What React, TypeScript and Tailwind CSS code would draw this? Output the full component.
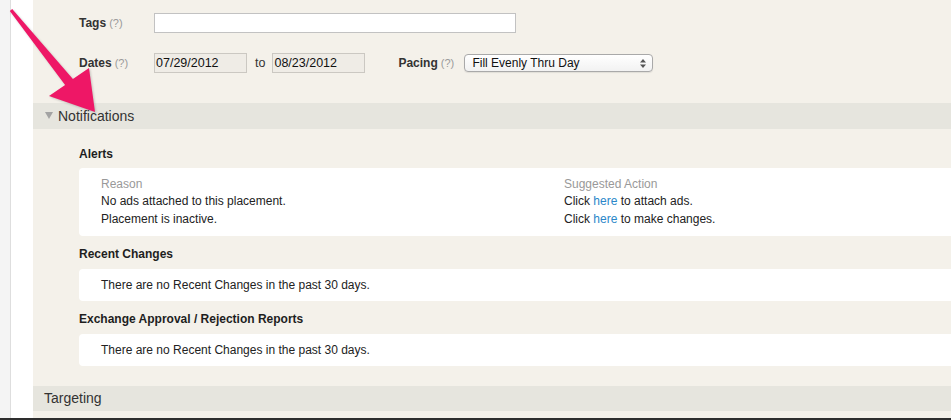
import React from 'react';

function Help() {
  return <span className="ml-[3px] text-[11px] font-normal text-[#9a9a9a]">(?)</span>;
}

function SectionBar({ title, open }: { title: string; open?: boolean }) {
  return (
    <div className="flex h-[26px] items-center bg-[#e6e5de] pl-[11px] text-[14px] text-[#333]">
      {open && (
        <svg width="8" height="7" viewBox="0 0 8 7" className="mr-[5px] ml-[1px] mt-[-2px]">
          <path d="M0 0 L8 0 L4 7 Z" fill="#a3a3a3" />
        </svg>
      )}
      <span>{title}</span>
    </div>
  );
}

function SubLabel({ children, top }: { children: React.ReactNode; top: string }) {
  return <div className={`${top} h-[16px] text-[12px] leading-[16px] font-bold text-[#1e1e1e]`}>{children}</div>;
}

function EmptyCard({ text }: { text: string }) {
  return (
    <div className="mt-[7px] flex h-[32px] items-center rounded-l-[4px] bg-white pl-[22px] text-[12px] text-[#222]">
      {text}
    </div>
  );
}

export default function App() {
  const alerts = [
    { reason: 'No ads attached to this placement.', action: 'to attach ads.' },
    { reason: 'Placement is inactive.', action: 'to make changes.' },
  ];

  return (
    <div className="relative flex h-[420px] w-[951px] overflow-hidden border-b-2 border-[#2e2e2e] bg-white font-['Liberation_Sans',Arial,sans-serif]">
      {/* left gutter */}
      <div className="w-[11px] shrink-0 border-r border-[#dedede] bg-[#f4f4f4]" />
      <div className="w-[22px] shrink-0 bg-white" />

      {/* main panel */}
      <div className="flex-1 bg-[#f4f1ea]">
        {/* form */}
        <div className="h-[103px] pt-[13px] pl-[46px] text-[12px] text-[#222]">
          <div className="flex h-[20px] items-center">
            <div className="w-[75px] shrink-0 font-bold text-[#333]">
              Tags<Help />
            </div>
            <div className="h-[20px] w-[362px] border border-[#c2c2c2] bg-white" />
          </div>
          <div className="mt-[20px] flex h-[20px] items-center">
            <div className="w-[75px] shrink-0 font-bold text-[#333]">
              Dates<Help />
            </div>
            <div className="flex h-[20px] w-[93px] shrink-0 items-center border border-[#cbc8c2] bg-[#efece6] pl-[1px] text-[12.5px] text-[#111]">
              07/29/2012
            </div>
            <span className="ml-[8px] mr-[7px] text-[12.5px] text-[#333]">to</span>
            <div className="flex h-[20px] w-[93px] shrink-0 items-center border border-[#cbc8c2] bg-[#efece6] pl-[1px] text-[12.5px] text-[#111]">
              08/23/2012
            </div>
            <div className="ml-[33px] w-[66px] shrink-0 font-bold text-[#333]">
              Pacing<Help />
            </div>
            <div className="flex h-[18px] w-[189px] shrink-0 items-center justify-between rounded-[4px] border border-[#a9a9a9] bg-gradient-to-b from-white to-[#f2f2f2] pl-[7px] pr-[6px] text-[12px] text-[#111] shadow-[0_1px_1px_rgba(0,0,0,0.08)]">
              <span>Fill Evenly Thru Day</span>
              <svg width="6" height="9" viewBox="0 0 6 9">
                <path d="M3 0 L6 3.5 L0 3.5 Z M3 9 L0 5.5 L6 5.5 Z" fill="#555" />
              </svg>
            </div>
          </div>
        </div>

        <SectionBar title="Notifications" open />

        <div className="pl-[46px]">
          <SubLabel top="mt-[17px]">Alerts</SubLabel>
          <div className="mt-[6px] h-[68px] rounded-l-[4px] bg-white pt-[7.5px] pl-[22px] text-[12px] leading-[17.5px] text-[#222]">
            <div className="grid grid-cols-[463px_1fr]">
              <div className="text-[#999]">Reason</div>
              <div className="text-[#999]">Suggested Action</div>
              {alerts.map((a) => (
                <React.Fragment key={a.reason}>
                  <div>{a.reason}</div>
                  <div>
                    Click <span className="text-[#2b87c9]">here</span> {a.action}
                  </div>
                </React.Fragment>
              ))}
            </div>
          </div>

          <SubLabel top="mt-[10px]">Recent Changes</SubLabel>
          <EmptyCard text="There are no Recent Changes in the past 30 days." />

          <SubLabel top="mt-[10px]">Exchange Approval / Rejection Reports</SubLabel>
          <EmptyCard text="There are no Recent Changes in the past 30 days." />
        </div>

        <div className="mt-[20px] flex h-[25px] items-center bg-[#e6e5de] pl-[11px] text-[14px] text-[#333]">
          Targeting
        </div>
      </div>

      {/* annotation arrow */}
      <svg
        className="pointer-events-none absolute left-0 top-0 drop-shadow-[1px_1px_1px_rgba(0,0,0,0.2)]"
        width="120"
        height="130"
        viewBox="0 0 120 130"
      >
        <polygon
          points="9.8,10.9 12.2,9.1 72.9,78.9 89,68 95,112 49,96 65.1,85.1"
          fill="#ee1766"
        />
      </svg>
    </div>
  );
}
